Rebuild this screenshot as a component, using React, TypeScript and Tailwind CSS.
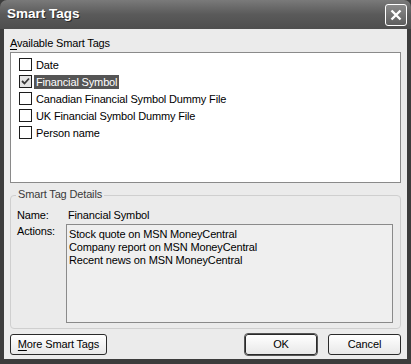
import React from "react";

const font = { fontFamily: '"Liberation Sans", Arial, sans-serif', letterSpacing: "-0.15px" };

function Check({ checked }: { checked?: boolean }) {
  return (
    <div
      className={
        "w-[13px] h-[13px] border border-[#1c1c1c] flex items-center justify-center shrink-0 " +
        (checked ? "bg-[#e4e4e4]" : "bg-white")
      }
    >
      {checked && (
        <svg width="9" height="9" viewBox="0 0 9 9">
          <path d="M1 4 L3.5 6.5 L8 1.5" stroke="#3a3a3a" strokeWidth="1.8" fill="none" />
        </svg>
      )}
    </div>
  );
}

export default function App() {
  const items = [
    "Date",
    "Financial Symbol",
    "Canadian Financial Symbol Dummy File",
    "UK Financial Symbol Dummy File",
    "Person name",
  ];
  return (
    <div className="w-[411px] h-[364px] bg-[#3c3c3c] flex flex-col text-[11px] text-black" style={font}>
      <div className="h-[29px] shrink-0 rounded-t-[7px] bg-gradient-to-b from-[#7a7a7a] via-[#5a5a5a] to-[#4e4e4e] flex items-center justify-between pl-[7px] pr-[4px]">
        <span className="text-white font-bold text-[13.5px] tracking-[0px] [text-shadow:1px_1px_0_#2a2a2a]">Smart Tags</span>
        <div className="w-[22px] h-[22px] rounded-[3px] border border-white bg-gradient-to-b from-[#8a8a8a] to-[#5e5e5e] flex items-center justify-center">
          <svg width="12" height="12" viewBox="0 0 12 12">
            <path d="M1.5 1.5 L10.5 10.5 M10.5 1.5 L1.5 10.5" stroke="white" strokeWidth="2.4" />
          </svg>
        </div>
      </div>
      <div className="flex-1 mx-[4px] mb-[5px] bg-[#ebebeb] flex flex-col px-[6px]">
        <div className="mt-[7px] h-[15px] leading-[15px]">
          <span className="underline decoration-1 underline-offset-2">A</span>vailable Smart Tags
        </div>
        <div className="mt-[1px] h-[131px] border border-[#8a8a8a] bg-white pt-[3px] pl-[8px] flex flex-col">
          {items.map((t, i) => (
            <div key={t} className="h-[17px] flex items-center gap-[2px]">
              <Check checked={i === 1} />
              <span
                className={
                  i === 1
                    ? "bg-[#555555] text-white px-[2px] leading-[14px]"
                    : "px-[2px] leading-[14px]"
                }
              >
                {t}
              </span>
            </div>
          ))}
        </div>
        <div className="relative mt-[12px] h-[134px] border border-[#cfcfcf] rounded-[4px] px-[6px] pt-[12px]">
          <div className="absolute -top-[9px] left-[5px] bg-[#ebebeb] px-[2px] text-[#3a3a3a] leading-[15px]">
            Smart Tag Details
          </div>
          <div className="flex h-[15px] leading-[15px]">
            <span className="w-[51px]">Name:</span>
            <span>Financial Symbol</span>
          </div>
          <div className="flex mt-[1px]">
            <span className="w-[49px] leading-[15px]">Actions:</span>
            <div className="w-[327px] h-[99px] border border-[#8a8a8a] bg-[#efefef] px-[2px] pt-[3px] leading-[13px]">
              <div>Stock quote on MSN MoneyCentral</div>
              <div>Company report on MSN MoneyCentral</div>
              <div>Recent news on MSN MoneyCentral</div>
            </div>
          </div>
        </div>
        <div className="mt-[5px] flex items-center">
          <button className="h-[21px] w-[97px] rounded-[3px] border border-[#2a2a2a] bg-gradient-to-b from-white to-[#e8e8e8] text-[11px] leading-[19px]">
            <span className="underline decoration-1 underline-offset-2">M</span>ore Smart Tags
          </button>
          <button className="ml-auto h-[21px] w-[72px] rounded-[3px] border border-[#2a2a2a] bg-gradient-to-b from-white to-[#e8e8e8] text-[11px] leading-[19px] outline outline-1 outline-[#555]">
            OK
          </button>
          <button className="ml-[11px] h-[21px] w-[73px] rounded-[3px] border border-[#2a2a2a] bg-gradient-to-b from-white to-[#e8e8e8] text-[11px] leading-[19px]">
            Cancel
          </button>
        </div>
      </div>
    </div>
  );
}
